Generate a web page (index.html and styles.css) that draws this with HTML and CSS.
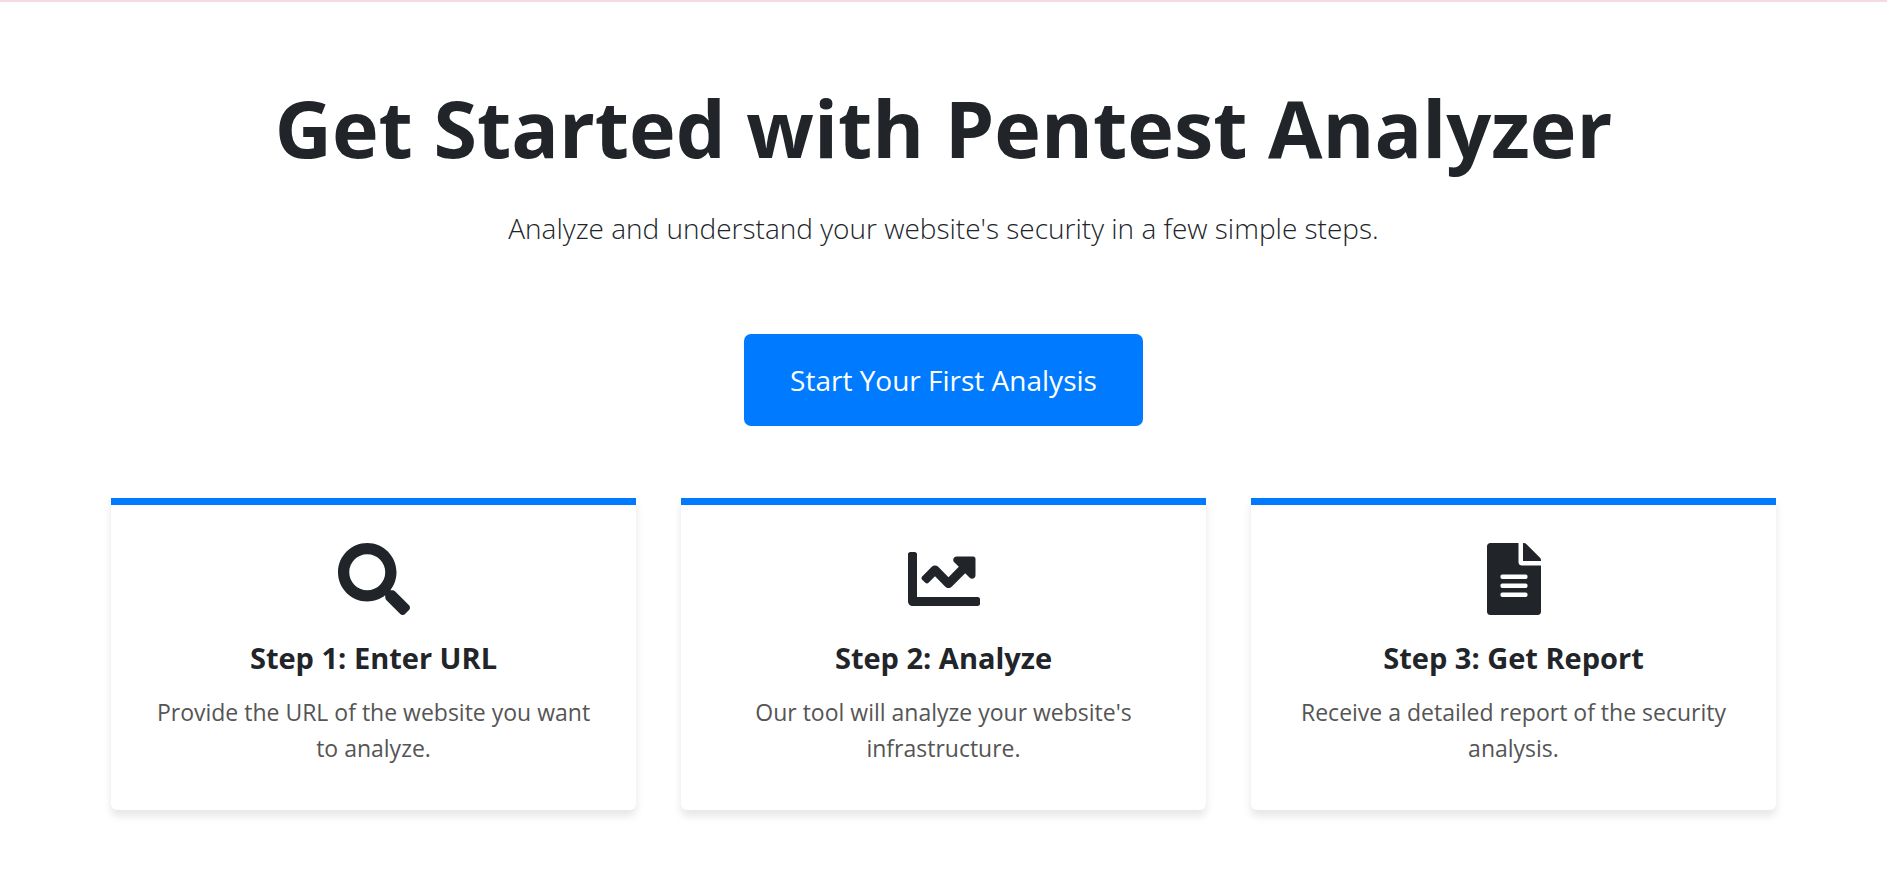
FILE: index.html
```html
<!DOCTYPE html>
<html lang="en">
<head>
<meta charset="utf-8">
<meta name="viewport" content="width=device-width, initial-scale=1">
<title>Pentest Analyzer</title>
<link rel="stylesheet" href="styles.css">
</head>
<body>
<main class="page">
  <div class="container">
    <header class="hero">
      <h1 class="hero-title">Get Started with Pentest Analyzer</h1>
      <p class="hero-lead">Analyze and understand your website's security in a few simple steps.</p>
      <button class="cta" type="button">Start Your First Analysis</button>
    </header>
    <section class="steps">
      <article class="card">
        <svg class="card-icon" viewBox="0 0 512 512" aria-hidden="true"><path d="M505 442.7L405.3 343c-4.5-4.5-10.6-7-17-7H372c27.6-35.3 44-79.7 44-128C416 93.1 322.9 0 208 0S0 93.1 0 208s93.1 208 208 208c48.3 0 92.7-16.4 128-44v16.3c0 6.4 2.5 12.5 7 17l99.7 99.7c9.4 9.4 24.6 9.4 33.9 0l28.3-28.3c9.4-9.4 9.4-24.6.1-34zM208 336c-70.7 0-128-57.2-128-128 0-70.7 57.2-128 128-128 70.7 0 128 57.2 128 128 0 70.7-57.2 128-128 128z"/></svg>
        <h2 class="card-title">Step 1: Enter URL</h2>
        <p class="card-text">Provide the URL of the website you want to analyze.</p>
      </article>
      <article class="card">
        <svg class="card-icon" viewBox="0 0 512 512" aria-hidden="true"><path d="M496 384H64V80c0-8.84-7.16-16-16-16H16C7.16 64 0 71.16 0 80v336c0 17.67 14.33 32 32 32h464c8.84 0 16-7.16 16-16v-32c0-8.84-7.16-16-16-16zM464 96H345.94c-21.38 0-32.09 25.85-16.97 40.97l32.4 32.4L288 242.75l-73.37-73.37c-12.5-12.5-32.76-12.5-45.25 0l-68.69 68.69c-6.25 6.25-6.25 16.38 0 22.63l22.62 22.62c6.25 6.25 16.38 6.25 22.63 0L192 237.25l73.37 73.37c12.5 12.5 32.76 12.5 45.25 0l96-96 32.4 32.4c15.12 15.12 40.97 4.41 40.97-16.97V112c.01-8.84-7.15-16-15.99-16z"/></svg>
        <h2 class="card-title">Step 2: Analyze</h2>
        <p class="card-text">Our tool will analyze your website's infrastructure.</p>
      </article>
      <article class="card">
        <svg class="card-icon" viewBox="-64 0 512 512" aria-hidden="true"><path d="M224 136V0H24C10.7 0 0 10.7 0 24v464c0 13.3 10.7 24 24 24h336c13.3 0 24-10.7 24-24V160H248c-13.2 0-24-10.8-24-24zm64 236c0 6.6-5.4 12-12 12H108c-6.6 0-12-5.4-12-12v-8c0-6.6 5.4-12 12-12h168c6.6 0 12 5.4 12 12v8zm0-64c0 6.6-5.4 12-12 12H108c-6.6 0-12-5.4-12-12v-8c0-6.6 5.4-12 12-12h168c6.6 0 12 5.4 12 12v8zm0-72v8c0 6.6-5.4 12-12 12H108c-6.6 0-12-5.4-12-12v-8c0-6.6 5.4-12 12-12h168c6.6 0 12 5.4 12 12zm96-114.1v6.1H256V0h6.1c6.4 0 12.5 2.5 17 7l97.9 98c4.5 4.5 7 10.6 7 16.9z"/></svg>
        <h2 class="card-title">Step 3: Get Report</h2>
        <p class="card-text">Receive a detailed report of the security analysis.</p>
      </article>
    </section>
  </div>
</main>
</body>
</html>
```
FILE: styles.css
```css
*, *::before, *::after {
  box-sizing: border-box;
}

body {
  margin: 0;
  background: #fff;
  color: #212529;
  font-family: "Segoe UI", "Open Sans", "Noto Sans", sans-serif;
  font-size: 24px;
  line-height: 36px;
}

.page {
  border-top: 2px solid #f5dadf;
  padding: 76px 24px 64px;
}

.container {
  max-width: 1665px;
  margin: 0 auto;
}

.hero {
  display: flex;
  flex-direction: column;
  align-items: center;
  text-align: center;
}

.hero-title {
  margin: 0;
  font-size: 79px;
  font-weight: 700;
  line-height: 100px;
}

.hero-lead {
  margin: 28px 0 0;
  font-size: 28px;
  font-weight: 300;
  line-height: 45px;
}

.cta {
  margin: 83px 0 72px;
  padding: 23px 46px;
  border: 0;
  border-radius: 7px;
  background: #007bff;
  color: #fff;
  font-family: inherit;
  font-size: 28px;
  line-height: 46px;
  cursor: pointer;
}

.steps {
  display: grid;
  grid-template-columns: repeat(auto-fit, minmax(min(100%, 400px), 1fr));
  gap: 45px;
}

.card {
  display: flex;
  flex-direction: column;
  align-items: center;
  padding: 38px 38px 44px;
  border-top: 7px solid #007bff;
  border-radius: 0 0 6px 6px;
  background: #fff;
  box-shadow: 0 6px 9px rgba(0, 0, 0, 0.1);
  text-align: center;
}

.card-icon {
  width: 72px;
  height: 72px;
  fill: currentColor;
}

.card-title {
  margin: 23px 0 17px;
  font-size: 29px;
  font-weight: 700;
  line-height: 39px;
}

.card-text {
  margin: 0;
  color: #555;
  font-size: 23px;
  line-height: 36px;
}
```
